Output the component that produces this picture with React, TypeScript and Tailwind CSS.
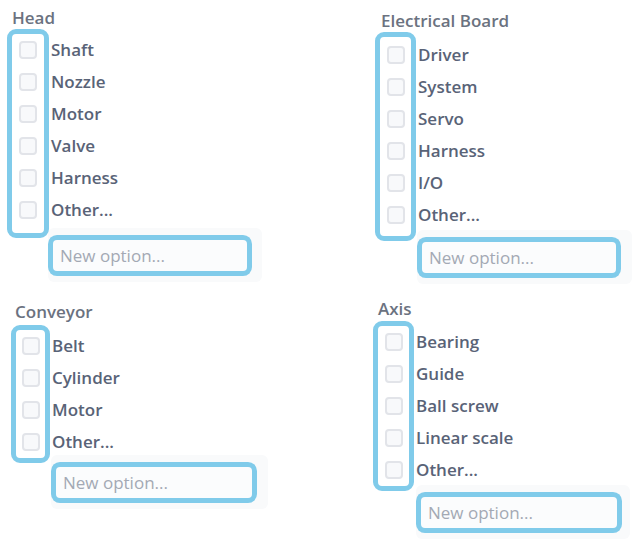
import React from 'react';

type Group = {
  title: string;
  options: string[];
  wrap: string;
  titleCls: string;
  colCls: string;
  panelCls: string;
  inputCls: string;
};

const groups: Group[] = [
  {
    title: 'Head',
    options: ['Shaft', 'Nozzle', 'Motor', 'Valve', 'Harness', 'Other...'],
    wrap: 'ml-[7px] pt-[7px]',
    titleCls: 'pl-[5px]',
    colCls: 'w-[42px] pt-0 pb-[7px]',
    panelCls: 'ml-[41px] -mt-[10px] w-[214px]',
    inputCls: 'w-[194px]',
  },
  {
    title: 'Electrical Board',
    options: ['Driver', 'System', 'Servo', 'Harness', 'I/O', 'Other...'],
    wrap: 'ml-[7px] pt-[10px]',
    titleCls: 'pl-[6px]',
    colCls: 'w-[41px] pt-[2px] pb-[5px]',
    panelCls: 'ml-[42px] -mt-[11px] w-[215px]',
    inputCls: 'w-[194px]',
  },
  {
    title: 'Conveyor',
    options: ['Belt', 'Cylinder', 'Motor', 'Other...'],
    wrap: 'ml-[11px] pt-[17px]',
    titleCls: 'pl-[4px] mb-[2px]',
    colCls: 'w-[39px] py-0',
    panelCls: 'ml-[40px] -mt-[8px] w-[217px]',
    inputCls: 'w-[196px]',
  },
  {
    title: 'Axis',
    options: ['Bearing', 'Guide', 'Ball screw', 'Linear scale', 'Other...'],
    wrap: 'ml-[5px] pt-[14px]',
    titleCls: 'pl-[5px] mb-px',
    colCls: 'w-[41px] py-0',
    panelCls: 'ml-[43px] -mt-[6px] w-[214px]',
    inputCls: 'w-[196px]',
  },
];

function OptionGroup({ g }: { g: Group }) {
  return (
    <div className={g.wrap}>
      <div className={`text-[17px] leading-[22px] font-semibold text-[#6b7280] ${g.titleCls}`}>{g.title}</div>
      <div className="flex">
        {/* checkbox column, outlined */}
        <div className={`flex flex-col items-center border-[5px] border-[#80cbea] rounded-[9px] ${g.colCls}`}>
          {g.options.map(o => (
            <div key={o} className="h-8 flex items-center">
              <span className="block w-[18px] h-[18px] rounded-[4px] border-2 border-[#e2e4e9] bg-[#f8f9fb]" />
            </div>
          ))}
        </div>
        <div className={`flex flex-col pl-[2px] ${g.colCls.includes('pt-[2px]') ? 'pt-[7px]' : 'pt-[5px]'}`}>
          {g.options.map(o => (
            <div key={o} className="h-8 flex items-center text-[17px] font-semibold text-[#596377] whitespace-nowrap">
              {o}
            </div>
          ))}
        </div>
      </div>
      <div className={`bg-[#f9fafb] rounded-[6px] pl-[5px] pt-[12px] pb-[11px] ${g.panelCls}`}>
        <div className={`h-[31px] rounded-[4px] bg-[#fbfcfd] ring-[5px] ring-[#80cbea] flex items-center pl-[7px] text-[17px] text-[#a3a9b4] ${g.inputCls}`}>
          New option...
        </div>
      </div>
    </div>
  );
}

export default function App() {
  return (
    <div className="w-[638px] h-[543px] bg-white overflow-hidden" style={{ fontFamily: '"Open Sans", "Noto Sans", sans-serif' }}>
      <div className="grid grid-cols-[368px_270px] grid-rows-[284px_259px]">
        {groups.map(g => (
          <OptionGroup key={g.title} g={g} />
        ))}
      </div>
    </div>
  );
}
